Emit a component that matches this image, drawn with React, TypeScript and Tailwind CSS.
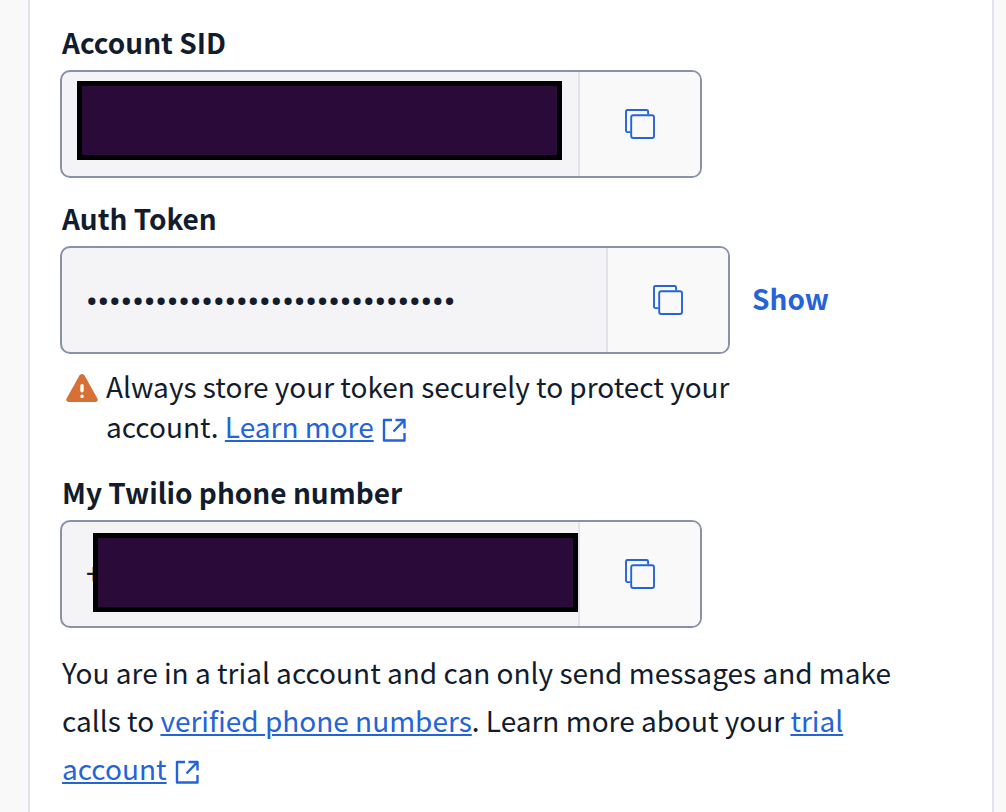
import { ReactNode, useState } from 'react';
import { clsx } from 'clsx';

const CopyIcon = () => (
  <svg width="30" height="30" viewBox="0 0 30 30" fill="none" stroke="currentColor" strokeWidth="1.9" aria-hidden="true">
    <path d="M5.5 23.1H2.5a1.5 1.5 0 0 1-1.5-1.5V2.5A1.5 1.5 0 0 1 2.5 1h19.1a1.5 1.5 0 0 1 1.5 1.5v3.1" />
    <rect x="6.2" y="6.2" width="22.8" height="22.8" rx="2" />
  </svg>
);

const ExternalIcon = () => (
  <svg
    className="ml-2 inline-block align-[-4px]"
    width="24"
    height="24"
    viewBox="0 0 24 24"
    fill="none"
    stroke="currentColor"
    strokeWidth="2.4"
    strokeLinejoin="round"
    aria-hidden="true"
  >
    <path d="M10 2H2v20.5h20.5V15M13.5 2h9v8.5M22 2.5 11.5 13.5" />
  </svg>
);

const WarningIcon = () => (
  <svg className="mt-2 shrink-0 text-[#d67035]" width="32" height="28" viewBox="0 0 32 28" aria-hidden="true">
    <path
      fill="currentColor"
      d="M13.4 1.5a3 3 0 0 1 5.2 0l12.8 22.9c1 1.8 0 3.6-2 3.6H2.6c-2 0-3-1.8-2-3.6z"
    />
    <path stroke="#fff" strokeWidth="3.4" strokeLinecap="round" d="M16 11.6v5.2M16 22.2v.2" />
  </svg>
);

interface CopyFieldProps {
  id: string;
  label: string;
  value: string;
  type?: string;
  width: string;
  children?: ReactNode;
  action?: ReactNode;
}

function CopyField({ id, label, value, type = 'text', width, children, action }: CopyFieldProps) {
  return (
    <div>
      <label htmlFor={id} className="mb-2 block px-0.5 text-[28px] leading-10 font-bold">
        {label}
      </label>
      <div className="flex items-center gap-5">
        <div className={clsx('relative flex h-27 overflow-hidden rounded-[10px] border-2 border-[#8891aa] bg-[#f4f4f6]', width)}>
          <input
            id={id}
            type={type}
            value={value}
            readOnly
            className={clsx(
              'min-w-0 flex-1 px-6 font-[Roboto,sans-serif] outline-none',
              type === 'password' ? 'pt-1 text-[33px] font-medium' : 'text-[28px]'
            )}
          />
          {/* Redaction over the value */}
          {children}
          <button
            type="button"
            aria-label={`Copy ${label}`}
            className="flex w-[122px] shrink-0 items-center justify-center border-l-2 border-[#e1e3ea] bg-[#f9f9f9] text-[#2563d9]"
            onClick={() => navigator.clipboard?.writeText(value)}
          >
            <CopyIcon />
          </button>
        </div>
        {action}
      </div>
    </div>
  );
}

export default function App() {
  const [showToken, setShowToken] = useState(false);

  return (
    <div className="min-h-screen bg-[#f9f9f9] pr-3 pl-7 font-['Noto_Sans_CJK_JP','Noto_Sans',sans-serif] text-[#121c2d]">
      <main className="min-h-screen border-x-2 border-[#e1e3ea] bg-white pt-[22px] pr-12 pl-[30px]">
        <CopyField id="sid" label="Account SID" value="" width="w-full max-w-[642px]">
          <div className="absolute top-[9px] left-[15px] h-[79px] w-[485px] border-5 border-black bg-[#2a0a38]" />
        </CopyField>

        <div className="mt-5">
          <CopyField
            id="token"
            label="Auth Token"
            value={'0'.repeat(32)}
            type={showToken ? 'text' : 'password'}
            width="w-full max-w-[670px]"
            action={
              <button
                type="button"
                className="px-0.5 pb-1 text-[28px] leading-10 font-bold text-[#2563d9]"
                onClick={() => setShowToken(!showToken)}
              >
                Show
              </button>
            }
          />
        </div>

        <div className="mt-3 flex gap-2 pl-1.5 text-[28px] leading-10">
          <WarningIcon />
          <p className="max-w-[660px]">
            Always store your token securely to protect your account.{' '}
            <a href="#learn" className="text-[#2563d9]">
              <span className="underline decoration-2 underline-offset-2">Learn more</span>
              <ExternalIcon />
            </a>
          </p>
        </div>

        <div className="mt-[26px]">
          <CopyField id="phone" label="My Twilio phone number" value="+" width="w-full max-w-[642px]">
            <div className="absolute top-[11px] left-[31px] h-[79px] w-[485px] border-5 border-black bg-[#2a0a38]" />
          </CopyField>
        </div>

        <p className="mt-5 px-0.5 text-[28px] leading-12">
          You are in a trial account and can only send messages and make calls to{' '}
          <a href="#verified" className="text-[#2563d9] underline decoration-2 underline-offset-2">
            verified phone numbers
          </a>
          . Learn more about your{' '}
          <a href="#trial" className="text-[#2563d9]">
            <span className="underline decoration-2 underline-offset-2">trial account</span>
            <ExternalIcon />
          </a>
        </p>
      </main>
    </div>
  );
}
